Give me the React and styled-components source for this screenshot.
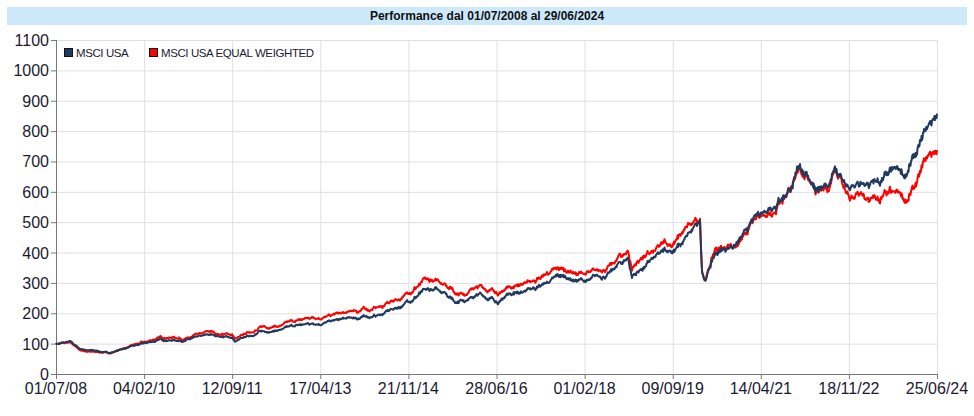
import React from "react";
import styled, { createGlobalStyle } from "styled-components";

const Global = createGlobalStyle`
  body { margin: 0; background: #fff; font-family: "Liberation Sans", Arial, sans-serif; }
`;
const Page = styled.div`
  width: 974px; height: 416px; padding: 7px 7px 0 7px; box-sizing: border-box;
  display: flex; flex-direction: column;
`;
const Title = styled.div`
  height: 18px; background: #cce8fb; display: flex; align-items: center; justify-content: center;
  font-size: 12px; font-weight: bold; color: #111;
`;
const Chart = styled.svg`
  display: block; margin-left: -7px;
`;

const X0 = 56, X1 = 937, Y0 = 374, PER = (374 - 40) / 1100;
const yv = (v) => Y0 - v * PER;

const blueA = [[56,100],[70,105],[80,82],[95,76],[110,70],[125,85],[144,98],[160,112],[185,112],[210,126],[232,120],[235,106],[260,138],[290,152],[320,170],[350,180],[380,195],[400,222],[420,268],[445,272],[455,245],[480,262],[500,240],[510,268],[530,280],[560,318],[590,305],[610,330],[628,380],[632,322],[650,370],[680,420],[700,492],[702,340],[705,312],[715,395],[740,440],[770,560],[795,640],[800,685],[815,630],[830,600],[835,680],[850,610],[870,610],[890,640],[905,650],[920,740],[937,850]];
const factorA = [[56,1],[90,0.93],[144,1.06],[400,1.13],[690,1.05],[740,0.97],[800,1.0],[835,1.0],[850,0.96],[937,0.85]];

function interp(a, x) {
  for (let i = 1; i < a.length; i++) {
    if (x <= a[i][0]) {
      const [x0, v0] = a[i - 1], [x1, v1] = a[i];
      return v0 + (v1 - v0) * (x - x0) / (x1 - x0);
    }
  }
  return a[a.length - 1][1];
}
function rng(seed) {
  let s = seed;
  return () => { s = (s * 16807) % 2147483647; return s / 2147483647 - 0.5; };
}
function build() {
  const r1 = rng(7), r2 = rng(99), r3 = rng(1234);
  let n1 = 0, n2 = 0;
  const b = [], rd = [];
  for (let x = X0; x <= X1; x += 0.5) {
    n1 = n1 * 0.95 + r1() * 0.025;
    n2 = n2 * 0.93 + r2() * 0.014;
    const j = r3() * 0.02;
    const base = interp(blueA, x) * (1 + n1 + j);
    const red = interp(blueA, x) * (1 + n1 + j * 0.8) * interp(factorA, x) * (1 + n2);
    b.push(`${x.toFixed(1)},${yv(base).toFixed(1)}`);
    rd.push(`${x.toFixed(1)},${yv(red).toFixed(1)}`);
  }
  return { b: b.join(" "), r: rd.join(" ") };
}
const series = build();
const xLabels = ["01/07/08","04/02/10","12/09/11","17/04/13","21/11/14","28/06/16","01/02/18","09/09/19","14/04/21","18/11/22","25/06/24"];

export default function App() {
  return (
    <Page>
      <Global />
      <Title>Performance dal 01/07/2008 al 29/06/2024</Title>
      <Chart width="974" height="391" viewBox="0 25 974 391">
        <g stroke="#e0e0e0" strokeWidth="1">
          {Array.from({ length: 11 }, (_, i) => (
            <line key={"h" + i} x1={X0} x2={X1} y1={yv((i + 1) * 100) + 0.5} y2={yv((i + 1) * 100) + 0.5} />
          ))}
          {xLabels.map((_, i) => i > 0 && (
            <line key={"v" + i} x1={X0 + i * 88.1 + 0.5} x2={X0 + i * 88.1 + 0.5} y1={40} y2={Y0} />
          ))}
        </g>
        <g stroke="#777" strokeWidth="1">
          <line x1={X0 + 0.5} x2={X0 + 0.5} y1={40} y2={Y0 + 5} />
          <line x1={X0 - 5} x2={X1} y1={Y0 + 0.5} y2={Y0 + 0.5} />
          {Array.from({ length: 12 }, (_, i) => (
            <line key={i} x1={X0 - 5} x2={X0} y1={yv(i * 100) + 0.5} y2={yv(i * 100) + 0.5} />
          ))}
          {xLabels.map((_, i) => (
            <line key={"t" + i} x1={X0 + i * 88.1 + 0.5} x2={X0 + i * 88.1 + 0.5} y1={Y0} y2={Y0 + 5} />
          ))}
        </g>
        <g fontFamily="Liberation Sans, Arial, sans-serif" fontSize="16" fill="#1a1a33">
          {Array.from({ length: 12 }, (_, i) => (
            <text key={i} x={X0 - 7} y={yv(i * 100) + 6} textAnchor="end">{i * 100}</text>
          ))}
          {xLabels.map((l, i) => (
            <text key={l} x={X0 + i * 88.1} y={394} textAnchor="middle">{l}</text>
          ))}
        </g>
        <polyline points={series.r} fill="none" stroke="#ff0000" strokeWidth="2" strokeLinejoin="round" />
        <polyline points={series.b} fill="none" stroke="#1f3a5f" strokeWidth="2" strokeLinejoin="round" />
        <g fontFamily="Liberation Sans, Arial, sans-serif" fontSize="11.5" fill="#1a1a33" letterSpacing="-0.4">
          <rect x="64.5" y="48.5" width="8" height="8" fill="#1f3a5f" stroke="#111" />
          <text x="76" y="56.5">MSCI USA</text>
          <rect x="149.5" y="48.5" width="8" height="8" fill="#ff0000" stroke="#111" />
          <text x="161" y="56.5">MSCI USA EQUAL WEIGHTED</text>
        </g>
      </Chart>
    </Page>
  );
}
